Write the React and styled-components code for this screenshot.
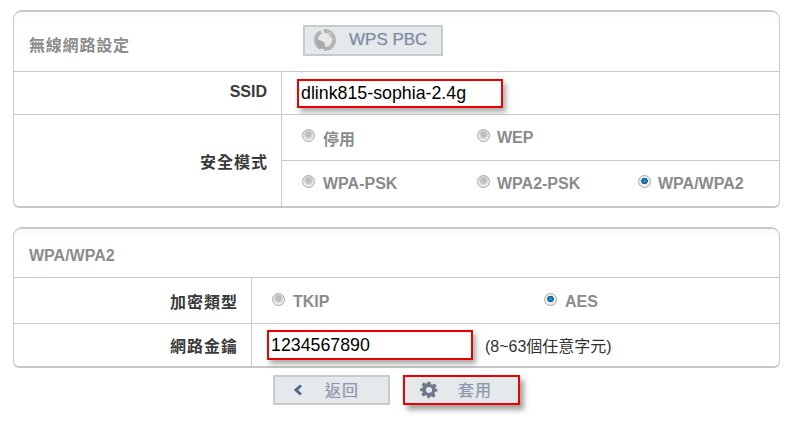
import React from "react";
import styled, { createGlobalStyle } from "styled-components";

const CJK = `"Liberation Sans", "Noto Sans CJK TC", sans-serif`;

const Global = createGlobalStyle`
  html, body { margin: 0; padding: 0; background: #fff; }
  body { font-family: ${CJK}; }
  * { box-sizing: border-box; }
`;

const Page = styled.div`
  width: 788px;
  height: 422px;
  padding: 10px 8px 0 13px;
  overflow: hidden;
  background: #fff;
`;

const Card = styled.section`
  width: 767px;
  margin-bottom: ${(p) => p.$gap || 0}px;
  border: 1px solid #cbcbcb;
  border-top: 2px solid #c9c9c9;
  border-bottom: 2px solid #c6c6c6;
  border-radius: 9px 9px 6px 6px;
  background: #fff;
`;

const Header = styled.div`
  height: ${(p) => p.$h}px;
  display: flex;
  align-items: center;
  padding-left: 15px;
  border-bottom: 1px solid #cacaca;
  border-radius: 8px 8px 0 0;
  background: linear-gradient(#fbfbfb, #fff 12px);
`;

const Title = styled.h2`
  margin: ${(p) => p.$offset || 0}px 0 0;
  width: ${(p) => p.$w}px;
  font-size: 16px;
  font-weight: bold;
  color: #8c8c8c;
  letter-spacing: ${(p) => p.$spacing || 0}px;
`;

const PushButton = styled.div`
  display: flex;
  align-items: center;
  width: 117px;
  height: 30px;
  padding-left: ${(p) => p.$pl || 15}px;
  background: #e6e9eb;
  border: 2px solid #c6cbce;
  color: #8e99ad;
  text-shadow: 0 0 1px rgba(142, 153, 173, 0.6);
`;

const WpsButton = styled(PushButton)`
  width: 140px;
  height: 31px;
  margin-top: -3px;
  padding-left: 8px;
  gap: 10px;
  font-size: 17px;
  color: #7f8ca5;
`;

const Row = styled.div`
  display: flex;
  height: ${(p) => p.$h}px;
  border-bottom: ${(p) => (p.$last ? "none" : "1px solid #cacaca")};
`;

const Label = styled.div`
  width: ${(p) => p.$w}px;
  flex: none;
  display: flex;
  align-items: center;
  justify-content: flex-end;
  padding-right: 13px;
  border-right: 1px solid #cacaca;
  font-size: 16px;
  font-weight: bold;
  color: #3a3a3a;
  letter-spacing: ${(p) => p.$spacing || 0}px;
`;

const SsidLabel = styled(Label)`
  padding-bottom: 2px;
  padding-right: 14px;
`;

const Cell = styled.div`
  flex: 1;
  min-width: 0;
  display: flex;
  flex-direction: column;
`;

const FieldCell = styled(Cell)`
  flex-direction: row;
  align-items: center;
  padding-left: ${(p) => p.$pl}px;
`;

const OptionRow = styled.div`
  flex: 1;
  display: grid;
  grid-template-columns: ${(p) => p.$cols};
  align-items: center;
  padding-left: 20px;
  padding-top: ${(p) => p.$pt || 0}px;
  border-bottom: ${(p) => (p.$line ? "1px solid #cacaca" : "none")};
`;

const Option = styled.div`
  display: flex;
  align-items: center;
  gap: ${(p) => p.$gap || 8}px;
  font-size: 16px;
  font-weight: bold;
  color: #8b8b8b;
`;

const Radio = styled.span`
  width: 13px;
  height: 13px;
  flex: none;
  margin-top: -5px;
  border-radius: 50%;
  border: 1px solid #a8a8a8;
  background: ${(p) =>
    p.$on
      ? "radial-gradient(circle at 50% 45%, #2f9bd6 0, #0a5f9a 3px, #f1f1f1 3.6px, #e4e4e4 100%)"
      : "radial-gradient(circle at 50% 40%, #b8b8b8 0, #c4c4c4 3px, #ececec 5px, #f5f5f5 100%)"};
`;

const KeyBox = styled.div`
  width: 206px;
  height: ${(p) => p.$h}px;
  flex: none;
  display: flex;
  align-items: center;
  padding-left: 2px;
  border: 2px solid #ec0000;
  box-shadow: 3px 4px 5px rgba(90, 90, 90, 0.5);
  background: #fff;
  color: #000;
  font-size: 17.8px;
`;

const Hint = styled.span`
  margin-left: 12px;
  font-size: 16px;
  color: #333;
`;

const Actions = styled.div`
  display: flex;
  gap: 13px;
  margin-top: 7px;
  padding-left: 260px;
`;

const ApplyButton = styled(PushButton)`
  border: 2px solid #ec0000;
  box-shadow: 4px 5px 5px rgba(90, 90, 90, 0.55);
`;

const ButtonText = styled.span`
  font-size: 16px;
  letter-spacing: 1px;
  margin-top: -3px;
  margin-left: ${(p) => p.$ml}px;
`;

const Wps = () => (
  <svg width="26" height="24" viewBox="0 0 26 24">
    <circle cx="12" cy="12" r="9" fill="none" stroke="#b2b4b5" strokeWidth="4" strokeDasharray="15 3 20 3" />
    <path d="M4 11a8 8 0 0 0 9 10l-2-7z" fill="#a7a9aa" />
    <path d="M14 3l5 2-2 5z" fill="#c4c6c7" />
  </svg>
);

const Back = () => (
  <svg width="10" height="12" viewBox="0 0 10 12">
    <path d="M8 1.5 3 6l5 4.5" fill="none" stroke="#53688a" strokeWidth="3" />
  </svg>
);

const Gear = () => (
  <svg width="18" height="18" viewBox="0 0 24 24">
    <path
      fillRule="evenodd"
      fill="#70798a"
      d="M10 1h4l.7 3.2 1.9.8 2.8-1.8 2.8 2.8-1.8 2.8.8 1.9L23 10.4v3.6l-3.2.7-.8 1.9 1.8 2.8-2.8 2.8-2.8-1.8-1.9.8L12.6 23H10l-.7-3.2-1.9-.8-2.8 1.8-2.8-2.8 1.8-2.8-.8-1.9L0 13.6V10l3.2-.7.8-1.9L2.2 4.6 5 1.8 7.8 3.6 9.7 2.8zM12 8a4 4 0 1 0 0 8 4 4 0 0 0 0-8z"
    />
  </svg>
);

export default function App() {
  return (
    <Page>
      <Global />
      <Card $gap={19}>
        <Header $h={60}>
          <Title $w={274} $offset={5} $spacing={0.8}>無線網路設定</Title>
          <WpsButton>
            <Wps />
            WPS PBC
          </WpsButton>
        </Header>
        <Row $h={43}>
          <SsidLabel $w={268}>SSID</SsidLabel>
          <FieldCell $pl={15}>
            <KeyBox $h={29}>dlink815-sophia-2.4g</KeyBox>
          </FieldCell>
        </Row>
        <Row $h={91} $last>
          <Label $w={268} $spacing={1}>安全模式</Label>
          <Cell>
            <OptionRow $cols="175px 161px 1fr" $line>
              <Option>
                <Radio />
                停用
              </Option>
              <Option $gap={7}>
                <Radio />
                WEP
              </Option>
            </OptionRow>
            <OptionRow $cols="175px 161px 1fr">
              <Option>
                <Radio />
                WPA-PSK
              </Option>
              <Option $gap={7}>
                <Radio />
                WPA2-PSK
              </Option>
              <Option $gap={7}>
                <Radio $on />
                WPA/WPA2
              </Option>
            </OptionRow>
          </Cell>
        </Row>
      </Card>
      <Card>
        <Header $h={49}>
          <Title $w={200} $offset={5}>WPA/WPA2</Title>
        </Header>
        <Row $h={46}>
          <Label $w={238} $spacing={1}>加密類型</Label>
          <Cell>
            <OptionRow $cols="272px 1fr" $pt={2}>
              <Option>
                <Radio />
                TKIP
              </Option>
              <Option>
                <Radio $on />
                AES
              </Option>
            </OptionRow>
          </Cell>
        </Row>
        <Row $h={42} $last>
          <Label $w={238} $spacing={1}>網路金鑰</Label>
          <FieldCell $pl={15}>
            <KeyBox $h={30}>1234567890</KeyBox>
            <Hint>(8~63個任意字元)</Hint>
          </FieldCell>
        </Row>
      </Card>
      <Actions>
        <PushButton $pl={18}>
          <Back />
          <ButtonText $ml={22}>返回</ButtonText>
        </PushButton>
        <ApplyButton>
          <Gear />
          <ButtonText $ml={20}>套用</ButtonText>
        </ApplyButton>
      </Actions>
    </Page>
  );
}
